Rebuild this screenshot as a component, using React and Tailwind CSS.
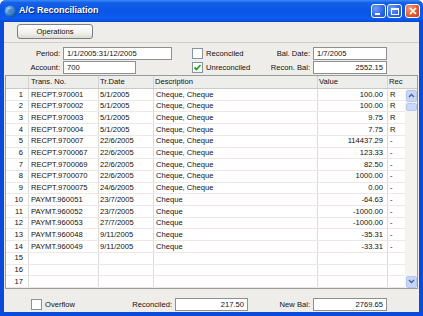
import React from "react";

const rows = [
	["RECPT.970001", "5/1/2005", "Cheque, Cheque", "100.00", "R"],
	["RECPT.970002", "5/1/2005", "Cheque, Cheque", "100.00", "R"],
	["RECPT.970003", "5/1/2005", "Cheque, Cheque", "9.75", "R"],
	["RECPT.970004", "5/1/2005", "Cheque, Cheque", "7.75", "R"],
	["RECPT.970007", "22/6/2005", "Cheque, Cheque", "114437.29", "-"],
	["RECPT.9700067", "22/6/2005", "Cheque, Cheque", "123.33", "-"],
	["RECPT.9700069", "22/6/2005", "Cheque, Cheque", "82.50", "-"],
	["RECPT.9700070", "22/6/2005", "Cheque, Cheque", "1000.00", "-"],
	["RECPT.9700075", "24/6/2005", "Cheque, Cheque", "0.00", "-"],
	["PAYMT.960051", "23/7/2005", "Cheque", "-64.63", "-"],
	["PAYMT.960052", "23/7/2005", "Cheque", "-1000.00", "-"],
	["PAYMT.960053", "27/7/2005", "Cheque", "-1000.00", "-"],
	["PAYMT.960048", "9/11/2005", "Cheque", "-35.31", "-"],
	["PAYMT.960049", "9/11/2005", "Cheque", "-33.31", "-"],
	["", "", "", "", ""],
	["", "", "", "", ""],
	["", "", "", "", ""],
];

function Field({ value, width, right }) {
	return (
		<div className={`${width} h-[13px] bg-white border border-[#8d8f90] flex items-center px-[3px] leading-none ${right ? "justify-end" : ""}`}>
			{value}
		</div>
	);
}

function Check({ checked }) {
	return (
		<div className="w-[11px] h-[11px] bg-white border border-[#8593a3] flex items-center justify-center shrink-0">
			{checked && (
				<svg width="9" height="9" viewBox="0 0 9 9">
					<path d="M1.5 4.5 L3.5 6.5 L7.5 2" fill="none" stroke="#21a121" strokeWidth="1.8" />
				</svg>
			)}
		</div>
	);
}

function TitleButton({ children, close }) {
	return (
		<div
			className={`w-[15px] h-[14px] rounded-[3px] border border-white flex items-center justify-center ${
				close
					? "bg-[radial-gradient(circle_at_30%_30%,#f39a7a,#e05a2c_60%,#c23d12)]"
					: "bg-[radial-gradient(circle_at_30%_30%,#6f9cf5,#2c67e6_60%,#1a4fcf)]"
			}`}
		>
			{children}
		</div>
	);
}

function ScrollArrow({ up }) {
	return (
		<div className="h-[12px] w-full rounded-[2px] border border-[#b6c8f2] bg-[#c6d6fb] flex items-center justify-center">
			<svg width="7" height="5" viewBox="0 0 7 5">
				<path d={up ? "M1 4 L3.5 1.5 L6 4" : "M1 1 L3.5 3.5 L6 1"} fill="none" stroke="#4d6185" strokeWidth="1.4" />
			</svg>
		</div>
	);
}

export default function App() {
	return (
		<div className="w-[423px] h-[316px] flex flex-col bg-[#0b4bdb] rounded-t-[6px] overflow-hidden text-[7.6px] text-[#111] font-['Liberation_Sans',Arial,sans-serif]">
			{/* title bar */}
			<div className="h-[22px] shrink-0 flex items-center pl-[4px] pr-[3px] bg-[linear-gradient(180deg,#3d8cf7_0%,#1561e8_12%,#0a55e6_45%,#0b5cf0_85%,#0847d4_100%)]">
				<svg width="13" height="13" viewBox="0 0 13 13">
					<defs>
						<radialGradient id="g" cx="35%" cy="35%" r="70%">
							<stop offset="0%" stopColor="#bfe3ff" />
							<stop offset="55%" stopColor="#3a86d6" />
							<stop offset="100%" stopColor="#134a9a" />
						</radialGradient>
					</defs>
					<circle cx="6.5" cy="6.5" r="6" fill="url(#g)" />
					<path d="M3 5 Q6 3 9 4 L8 8 Q5 9 4 7 Z" fill="#2f6db3" opacity="0.6" />
				</svg>
				<div className="ml-[2px] flex-1 text-white font-bold text-[9px] [text-shadow:1px_1px_0_#0a246a]">A/C Reconciliation</div>
				<div className="flex gap-[1px]">
					<TitleButton>
						<div className="w-[5px] h-[2px] bg-white mt-[6px] -ml-[3px]" />
					</TitleButton>
					<TitleButton>
						<div className="w-[8px] h-[7px] border border-white border-t-2" />
					</TitleButton>
					<div className="w-[1px]" />
					<TitleButton close>
						<svg width="8" height="8" viewBox="0 0 8 8">
							<path d="M1 1 L7 7 M7 1 L1 7" stroke="white" strokeWidth="1.7" />
						</svg>
					</TitleButton>
				</div>
			</div>

			{/* window body */}
			<div className="flex-1 mx-[4px] mb-[4px] bg-[#eeede9] flex flex-col">
				<div className="h-[21px] shrink-0 pt-[2px] pl-[13px] border-b border-[#cfcec9]">
					<div className="w-[76px] h-[15px] rounded-[3px] border border-[#7b7f86] bg-[linear-gradient(180deg,#ffffff,#f2f1ec_60%,#dcdad2)] flex items-center justify-center">
						Operations
					</div>
				</div>

				<div className="h-[32px] shrink-0 pt-[4px] flex flex-col">
					<div className="h-[14px] flex items-start">
						<div className="w-[56px] text-right leading-[13px]">Period:</div>
						<div className="w-[109px] ml-[3px]">
							<Field value="1/1/2005:31/12/2005" width="w-[109px]" />
						</div>
						<div className="w-[58px] ml-[20px] flex items-center gap-[3px] h-[13px]">
							<Check />
							<span>Reconciled</span>
						</div>
						<div className="w-[60px] text-right leading-[13px]">Bal. Date:</div>
						<div className="ml-[3px]">
							<Field value="1/7/2005" width="w-[74px]" />
						</div>
					</div>
					<div className="h-[14px] flex items-start">
						<div className="w-[56px] text-right leading-[13px]">Account:</div>
						<div className="w-[109px] ml-[3px]">
							<Field value="700" width="w-[73px]" />
						</div>
						<div className="w-[58px] ml-[20px] flex items-center gap-[3px] h-[13px]">
							<Check checked />
							<span>Unreconciled</span>
						</div>
						<div className="w-[60px] text-right leading-[13px]">Recon. Bal:</div>
						<div className="ml-[3px]">
							<Field value="2552.15" width="w-[74px]" right />
						</div>
					</div>
				</div>

				{/* grid */}
				<div className="h-[214px] shrink-0 ml-[1px] mr-[1px] border border-[#9b9b98] bg-white flex flex-col">
					<div className="h-[13px] shrink-0 flex bg-[#ededeb] border-b border-[#c9c9c6] leading-[12px]">
						<div className="w-[23px] border-r border-[#d4d4d0]" />
						<div className="w-[70px] border-r border-[#d4d4d0] pl-[2px]">Trans. No.</div>
						<div className="w-[55px] border-r border-[#d4d4d0] pl-[1px]">Tr.Date</div>
						<div className="w-[164px] border-r border-[#d4d4d0] pl-[1px]">Description</div>
						<div className="w-[70px] border-r border-[#d4d4d0] pl-[1px]">Value</div>
						<div className="w-[17px] pl-[1px]">Rec</div>
						<div className="flex-1" />
					</div>
					<div className="flex-1 flex min-h-0">
						<div className="w-[399px] grid grid-rows-[repeat(17,1fr)]">
							{rows.map((r, i) => (
								<div key={i} className="flex items-stretch border-b border-[#efe6e6] leading-none">
									<div className="w-[23px] border-r border-[#dcdcd8] flex items-center justify-end pr-[5px]">{i + 1}</div>
									<div className="w-[70px] border-r border-[#dcdcd8] flex items-center pl-[2px]">{r[0]}</div>
									<div className="w-[55px] border-r border-[#dcdcd8] flex items-center pl-[1px]">{r[1]}</div>
									<div className="w-[164px] border-r border-[#dcdcd8] flex items-center pl-[2px]">{r[2]}</div>
									<div className="w-[70px] border-r border-[#dcdcd8] flex items-center justify-end pr-[4px]">{r[3]}</div>
									<div className="w-[17px] flex items-center pl-[2px]">{r[4]}</div>
								</div>
							))}
						</div>
						<div className="w-[12px] bg-[#f4f3ee] flex flex-col p-[0.5px]">
							<ScrollArrow up />
							<div className="h-[8px] mt-[1px] rounded-[2px] border border-[#b6c8f2] bg-[#c9d8fb]" />
							<div className="flex-1" />
							<ScrollArrow />
						</div>
					</div>
				</div>

				{/* footer */}
				<div className="flex-1 flex items-start pt-[9px]">
					<div className="w-[79px] ml-[27px] flex items-center gap-[3px] h-[13px]">
						<Check />
						<span>Overflow</span>
					</div>
					<div className="w-[62px] text-right leading-[13px]">Reconciled:</div>
					<div className="ml-[3px]">
						<Field value="217.50" width="w-[73px]" right />
					</div>
					<div className="w-[62px] text-right leading-[13px]">New Bal:</div>
					<div className="ml-[3px]">
						<Field value="2769.65" width="w-[74px]" right />
					</div>
				</div>
			</div>
		</div>
	);
}
